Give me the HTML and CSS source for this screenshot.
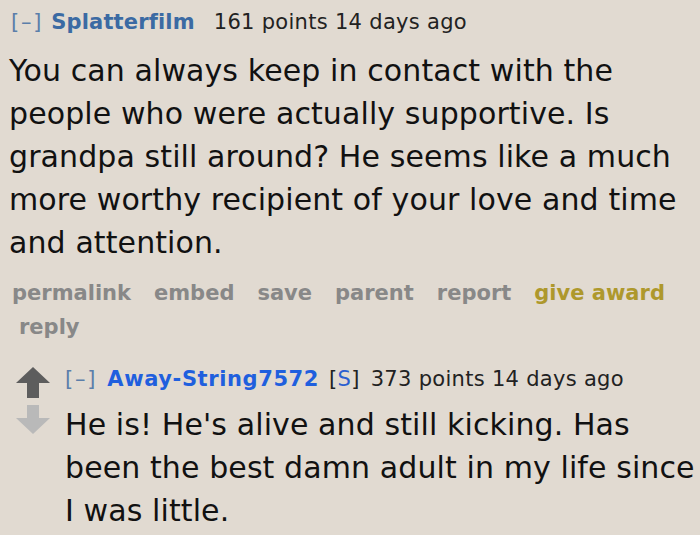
FILE: index.html
```html
<!DOCTYPE html>
<html>
<head>
<meta charset="utf-8">
<link rel="stylesheet" href="styles.css">
</head>
<body>
<div class="comment">
  <div class="tagline">
    <span class="expand">[–]</span>
    <span class="author">Splatterfilm</span>
    <span class="meta">161 points 14 days ago</span>
  </div>
  <p class="md">You can always keep in contact with the people who were actually supportive. Is grandpa still around? He seems like a much more worthy recipient of your love and time and attention.</p>
  <ul class="buttons">
    <li>permalink</li>
    <li>embed</li>
    <li>save</li>
    <li>parent</li>
    <li>report</li>
    <li class="award">give award</li>
    <li>reply</li>
  </ul>
  <div class="child">
    <div class="arrows">
      <svg class="up" width="34" height="31" viewBox="0 0 34 31"><path d="M17 0 L34 16 L23 16 L23 31 L11 31 L11 16 L0 16 Z" fill="#5d5d5d"/></svg>
      <svg class="down" width="34" height="29" viewBox="0 0 34 29"><path d="M11 0 L23 0 L23 13 L34 13 L17 29 L0 13 L11 13 Z" fill="#b9b9b9"/></svg>
    </div>
    <div class="entry">
      <div class="tagline">
        <span class="expand">[–]</span>
        <span class="author op">Away-String7572</span>
        <span class="submitter">[<span class="s">S</span>]</span>
        <span class="meta">373 points 14 days ago</span>
      </div>
      <p class="md">He is! He's alive and still kicking. Has been the best damn adult in my life since I was little.</p>
    </div>
  </div>
</div>
</body>
</html>
```

FILE: styles.css
```css
html, body {
  margin: 0;
  padding: 0;
  background: #e1dad1;
}
body {
  font-family: "DejaVu Sans", Verdana, sans-serif;
  color: #111;
  width: 700px;
  height: 535px;
  overflow: hidden;
}
.comment {
  padding: 8px 0 0 9px;
}
.tagline {
  font-size: 21px;
  line-height: 28px;
  letter-spacing: 0.3px;
  display: flex;
  align-items: baseline;
}
.expand {
  color: #5b7eaa;
  letter-spacing: 1.8px;
  margin-left: 2px;
  margin-right: 8px;
}
.author {
  color: #3b6aa3;
  font-weight: bold;
  letter-spacing: 0.15px;
  margin-right: 19px;
}
.meta {
  color: #222;
}
.md {
  margin: 13px 0 0 0;
  font-size: 30px;
  line-height: 43px;
  letter-spacing: 0.1px;
  width: 690px;
}
.buttons {
  list-style: none;
  margin: 12px 0 0 0;
  padding: 0 0 0 3px;
  display: flex;
  flex-wrap: wrap;
  column-gap: 23px;
  font-size: 21px;
  font-weight: bold;
  color: #888;
  line-height: 34px;
  width: 680px;
}
.buttons li:last-child {
  margin-left: 7px;
}
.award {
  color: #ae982c;
}
.child {
  display: flex;
  margin-top: 21px;
}
.arrows {
  display: flex;
  flex-direction: column;
  gap: 7px;
  padding: 2px 0 0 7px;
  width: 50px;
}
.entry .expand {
  margin-left: 0;
  margin-right: 10px;
}
.author.op {
  color: #1f5fde;
  letter-spacing: 0.6px;
  margin-right: 10px;
}
.submitter {
  color: #222;
  margin-right: 11px;
}
.s {
  color: #2a5fd0;
}
.entry .md {
  margin-top: 10px;
  width: 635px;
}
```
